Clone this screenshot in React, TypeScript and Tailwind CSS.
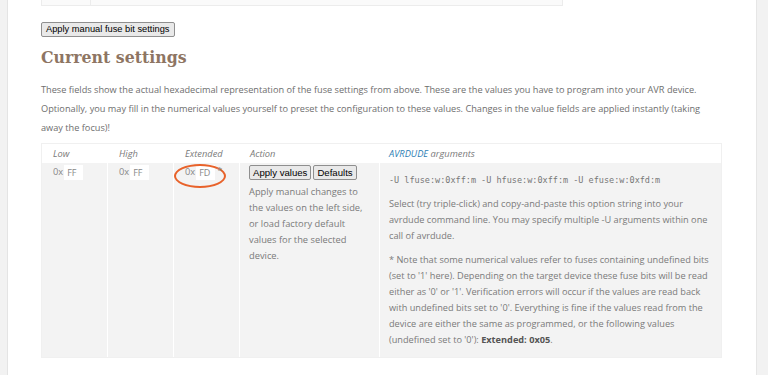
import React from 'react';

const body = "font-['Open_Sans',sans-serif]";

const HexField = ({ value, star = false, marked = false }: { value: string; star?: boolean; marked?: boolean }) => (
  <div className="relative flex items-start pl-[11px] pt-[2px]">
    <span className="text-[9.3px] leading-[14px] text-[#888]">0x</span>
    <span className="ml-[1px] h-[15px] w-[19px] bg-white pl-[3px] text-[9px] leading-[15px] text-[#888]">{value}</span>
    {star && <span className="relative z-10 ml-[2px] text-[9px] leading-[12px] text-[#888]">*</span>}
    {marked && (
      <span className="pointer-events-none absolute left-[0px] top-[1px] h-[24px] w-[52px] rounded-[50%] border-[2.5px] border-[#e8622a]" />
    )}
  </div>
);

export default function App() {
  return (
    <div className={`flex min-h-[375px] w-[768px] bg-white ${body}`}>
      <div className="w-[8px] shrink-0 border-r border-[#e4e4e4] bg-[#f2f2f2]" />

      <main className="flex w-[748px] flex-col pl-[33px] pr-[34px]">
        {/* bottom edge of the fuse table above */}
        <div className="flex h-[6px] w-[522px] border-x border-b border-[#ececec] bg-[#fafafa]">
          <div className="w-[49px] border-r border-[#ececec]" />
        </div>

        <div className="mt-[8px]">
          <button className="h-[15px] rounded-[2px] border border-[#8f8f8f] bg-[#e9e9e9] px-[4px] font-['Liberation_Sans',Arial,sans-serif] text-[9.3px] leading-[12px] text-black">
            Apply manual fuse bit settings
          </button>
        </div>

        <h2 className="mt-[4px] font-['DejaVu_Serif',serif] font-stretch-condensed text-[17.5px] font-bold leading-[30px] text-[#8e7563]">
          Current settings
        </h2>

        <p className="mt-[8px] text-[9.2px] leading-[19px] text-[#6e6e6e]">
          These fields show the actual hexadecimal representation of the fuse settings from above. These are the values you have to program into your AVR device. Optionally, you may fill in the numerical values yourself to preset the configuration to these values. Changes in the value fields are applied instantly (taking away the focus)!
        </p>

        <div className="mt-[6px] w-[681px] border border-[#f0f0f0] text-[#7a7a7a]">
          <div className="grid grid-cols-[66px_66px_66px_140px_1fr] bg-white text-[9.3px] italic leading-[19px]">
            <div className="pl-[11px]">Low</div>
            <div className="pl-[11px]">High</div>
            <div className="pl-[11px]">Extended</div>
            <div className="pl-[10px]">Action</div>
            <div className="pl-[9px]"><span className="text-[#2f7fb5]">AVRDUDE</span> arguments</div>
          </div>

          <div className="grid grid-cols-[66px_66px_66px_140px_1fr] bg-[#f3f3f3]">
            <div className="border-r border-white"><HexField value="FF" /></div>
            <div className="border-r border-white"><HexField value="FF" /></div>
            <div className="border-r border-white"><HexField value="FD" star marked /></div>
            <div className="border-r border-white pl-[9px] pt-[2px]">
              <div className="flex gap-[2px] font-['Liberation_Sans',Arial,sans-serif]">
                <button className="h-[15px] rounded-[2px] border border-[#8f8f8f] bg-[#e9e9e9] px-[3px] text-[9.6px] leading-[12px] text-black">Apply values</button>
                <button className="h-[15px] rounded-[2px] border border-[#8f8f8f] bg-[#e9e9e9] px-[3px] text-[9.6px] leading-[12px] text-black">Defaults</button>
              </div>
              <p className="mt-[4px] pr-[10px] text-[9.3px] leading-[16px] text-[#7a7a7a]">
                Apply manual changes to the values on the left side, or load factory default values for the selected device.
              </p>
            </div>
            <div className="pl-[9px] pr-[10px] pt-[10px] pb-[9px] text-[9.2px] leading-[16px] text-[#7a7a7a]">
              <div className="font-['DejaVu_Sans_Mono',monospace] text-[8.5px] leading-[14px] text-[#777]">
                -U lfuse:w:0xff:m -U hfuse:w:0xff:m -U efuse:w:0xfd:m
              </div>
              <p className="mt-[9px]">
                Select (try triple-click) and copy-and-paste this option string into your avrdude command line. You may specify multiple -U arguments within one call of avrdude.
              </p>
              <p className="mt-[8px]">
                * Note that some numerical values refer to fuses containing undefined bits (set to '1' here). Depending on the target device these fuse bits will be read either as '0' or '1'. Verification errors will occur if the values are read back with undefined bits set to '0'. Everything is fine if the values read from the device are either the same as programmed, or the following values (undefined set to '0'): <b className="text-[#555]">Extended: 0x05</b>.
              </p>
            </div>
          </div>
        </div>
      </main>

      <div className="w-[12px] shrink-0 border-l border-[#e6e6e6] bg-[#f2f2f2]" />
    </div>
  );
}
